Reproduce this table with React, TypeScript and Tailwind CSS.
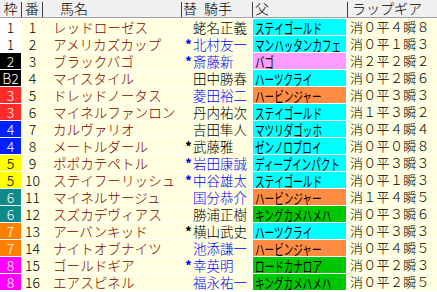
import React from "react";

type Row = {
  f: string;
  fc: string;
  n: number;
  horse: string;
  star: boolean;
  jockey: string;
  blue: boolean;
  sire: string;
  sc: string;
  lap: string;
};

const W = "bg-white text-black";
const K = "bg-black text-white";
const R = "bg-[#ff2a2a] text-white";
const B = "bg-[#0020ff] text-white";
const Y = "bg-[#ffff00] text-black";
const T = "bg-[#0f8a8a] text-white";
const O = "bg-[#ff8000] text-white";
const M = "bg-[#ff00ff] text-white";

const CY = "bg-[#00ffff]";
const PK = "bg-[#ff9cff]";
const OR = "bg-[#ff8c42]";
const GR = "bg-[#00c800]";

const rows: Row[] = [
  { f: "1", fc: W, n: 1, horse: "レッドローゼス", star: false, jockey: "蛯名正義", blue: false, sire: "ステイゴールド", sc: CY, lap: "消０平４瞬８" },
  { f: "1", fc: W, n: 2, horse: "アメリカズカップ", star: true, jockey: "北村友一", blue: true, sire: "マンハッタンカフェ", sc: CY, lap: "消０平１瞬３" },
  { f: "2", fc: K, n: 3, horse: "ブラックバゴ", star: true, jockey: "斎藤新", blue: true, sire: "バゴ", sc: PK, lap: "消２平２瞬２" },
  { f: "B2", fc: K, n: 4, horse: "マイスタイル", star: false, jockey: "田中勝春", blue: false, sire: "ハーツクライ", sc: CY, lap: "消０平２瞬６" },
  { f: "3", fc: R, n: 5, horse: "ドレッドノータス", star: false, jockey: "菱田裕二", blue: true, sire: "ハービンジャー", sc: OR, lap: "消０平３瞬３" },
  { f: "3", fc: R, n: 6, horse: "マイネルファンロン", star: false, jockey: "丹内祐次", blue: false, sire: "ステイゴールド", sc: CY, lap: "消１平３瞬２" },
  { f: "4", fc: B, n: 7, horse: "カルヴァリオ", star: false, jockey: "吉田隼人", blue: false, sire: "マツリダゴッホ", sc: CY, lap: "消０平４瞬４" },
  { f: "4", fc: B, n: 8, horse: "メートルダール", star: true, jockey: "武藤雅", blue: false, sire: "ゼンノロブロイ", sc: CY, lap: "消０平０瞬８" },
  { f: "5", fc: Y, n: 9, horse: "ポポカテペトル", star: true, jockey: "岩田康誠", blue: true, sire: "ディープインパクト", sc: CY, lap: "消０平３瞬３" },
  { f: "5", fc: Y, n: 10, horse: "ステイフーリッシュ", star: true, jockey: "中谷雄太", blue: true, sire: "ステイゴールド", sc: CY, lap: "消０平１瞬３" },
  { f: "6", fc: T, n: 11, horse: "マイネルサージュ", star: false, jockey: "国分恭介", blue: true, sire: "ハービンジャー", sc: OR, lap: "消１平４瞬５" },
  { f: "6", fc: T, n: 12, horse: "スズカデヴィアス", star: false, jockey: "勝浦正樹", blue: false, sire: "キングカメハメハ", sc: GR, lap: "消０平３瞬６" },
  { f: "7", fc: O, n: 13, horse: "アーバンキッド", star: true, jockey: "横山武史", blue: false, sire: "ハーツクライ", sc: CY, lap: "消０平３瞬３" },
  { f: "7", fc: O, n: 14, horse: "ナイトオブナイツ", star: false, jockey: "池添謙一", blue: true, sire: "ハービンジャー", sc: OR, lap: "消０平４瞬５" },
  { f: "8", fc: M, n: 15, horse: "ゴールドギア", star: true, jockey: "幸英明", blue: true, sire: "ロードカナロア", sc: GR, lap: "消０平２瞬３" },
  { f: "8", fc: M, n: 16, horse: "エアスピネル", star: false, jockey: "福永祐一", blue: true, sire: "キングカメハメハ", sc: GR, lap: "消０平２瞬５" },
];

function Sep() {
  return <div className="w-px mt-[2px] bg-[#3c3c3c] shrink-0" />;
}

export default function App() {
  return (
    <div className="w-[437px] h-[292px] bg-white overflow-hidden font-['Noto_Sans_CJK_JP',sans-serif] font-light text-black">
      {/* header */}
      <div className="flex h-[18px] bg-[#f0f0f0] border-b border-[#a0a0a0] text-[14px] leading-[17px]">
        <div className="w-[21px] shrink-0 text-center">枠</div>
        <Sep />
        <div className="w-[20px] shrink-0 text-center">番</div>
        <Sep />
        <div className="w-[138px] shrink-0 pl-[17px]">馬名</div>
        <Sep />
        <div className="w-[70px] shrink-0 flex">
          <span className="pl-[1px]">替</span>
          <span className="pl-[7px]">騎手</span>
        </div>
        <Sep />
        <div className="w-[94px] shrink-0 pl-[2px]">父</div>
        <Sep />
        <div className="w-[89px] shrink-0 pl-[4px]">ラップギア</div>
      </div>
      {/* body */}
      <div className="flex flex-col gap-px mt-px bg-white">
        {rows.map((r) => (
          <div key={r.n} className="flex h-[16px] leading-[16px] bg-white">
            <div className={`w-[21px] shrink-0 text-center text-[14px] ${r.fc}`}>{r.f}</div>
            <div className="w-px shrink-0 bg-white" />
            <div className="w-[21px] shrink-0 text-center text-[14px] bg-[#ffffe0]">{r.n}</div>
            <div className="w-[139px] shrink-0 pl-[10px] text-[13.6px] bg-[#ffffe0] text-[#800000] whitespace-nowrap overflow-hidden">
              {r.horse}
            </div>
            <div
              className={`w-[70px] shrink-0 flex bg-[#ffffe0] text-[13.5px] whitespace-nowrap overflow-hidden ${
                r.blue ? "text-[#0000ff]" : "text-black"
              }`}
            >
              <span className="w-[11px] shrink-0 pl-[3px] font-bold">{r.star ? "*" : ""}</span>
              <span>{r.jockey}</span>
            </div>
            <div className="w-px shrink-0 bg-white" />
            <div className={`w-[93px] shrink-0 pl-[2px] overflow-hidden whitespace-nowrap ${r.sc}`}>
              <span className="inline-block origin-left scale-x-[0.66] text-[14.5px] font-normal">{r.sire}</span>
            </div>
            <div className="w-[2px] shrink-0 bg-white" />
            <div className="w-[89px] shrink-0 pl-[2px] bg-[#ffffe0] text-[13px] tracking-[0.3px] whitespace-nowrap overflow-hidden">
              {r.lap}
            </div>
          </div>
        ))}
      </div>
    </div>
  );
}
